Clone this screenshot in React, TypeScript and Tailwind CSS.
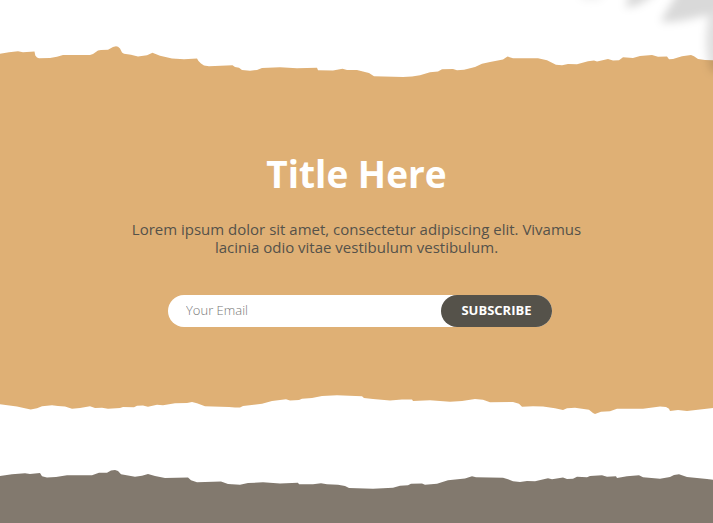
const upperEdge =
  "0,53.7 9,52.3 18,51.3 23,52.3 34.5,51.6 35.3,55.5 37,57.5 39,58.2 50,58 57,56.8 63,55 90,55 93,54 98,50.6 101,50 108,49.7 113,47 116,46.3 118,46.8 120,48.5 122,52.4 124,53.8 131,54.8 138,56.5 147,55.3 152.5,52.7 160,55.7 172,58.6 184,59.2 197,58.5 198.5,61 201,63.6 204,65.4 209,66.3 232.5,65.3 235,66.9 239,67.8 242,70 250,70.7 257,70 262,68 280,67.2 297,68.3 317,67.8 318,70.3 333,70.4 342.5,68.8 347,70 357,70 369,73 374,76.3 403,77 412,76.5 420,75.3 430,72.3 438,71.5 442,69.3 453,69 457,70.3 464,69.8 475,67 482,63.7 490,62 503,59.5 507.5,56.6 513,58.3 538,58.3 547,60.3 556,64.7 562,65.3 568,64 577,64.2 588,61.2 594,60.5 597,61.4 608,58.9 613,60.6 619,60.2 623,57.3 633,58 640,56 652,55 658,56.8 667,56.4 669,59.2 673,59 682,56.3 691,55 694,56.3 698,59 705,60 713,60.3";
const lowerEdge =
  "713,408 700,409.6 687,411 678,410 670,411 669,408.7 666,407 660,406.6 643,408.7 617,408.7 610,411.3 601,411.7 595,414 593,413 589,409.7 575,407.7 567,408.3 563,410 555,408.3 543,406.6 533,406.2 522,406.7 519,403.7 513,402 490,402.3 483,399.7 475,399 462,401 450,401.7 430,400.3 413,401 412,399.5 402,399.4 390,400.5 373,399 364,398 362,396.2 337,395.3 322,396 312,398 302,398.7 299,400 290,400.4 286,399.3 272,401 262,403.7 243,406 240,407.5 235,407.5 229,407 205,406.3 197,403.3 192,402 187,403 175,403.3 163,405.3 157,404.8 148,406.7 143,405.5 137,405.7 134,407.3 123,407 120,408 108,408.7 102,407.7 95,408 90,406.3 80,408 72,408.7 65,406.5 58,406 52,405.3 42,406.3 37,408.3 30.7,409.5 26,408.6 17,406.5 0,404.3";
const footerEdge =
  "0,476 12,474.3 25,473.3 30,474 40,473.1 42,476.3 47,477.6 56,477 67,475.3 92,475.3 99,472.7 107,472.7 111,470.6 115,470 118,471 121,474.3 135,476.7 142,475.7 148,474 155,476 165,478 188,477.4 191,480.3 197,482.3 221,481.6 228,484 240,484.7 248,483 263,482.3 280,483.5 298,482.7 299,484.3 313,484.3 321,483.3 327,484.3 338,484.7 345,486 349,488 373,488.7 393,487.7 400,485.7 408,485.3 411,483.7 422,483.5 425,484.7 437,483.7 448,480.3 465,478.5 472,476.3 476,477.3 503,477.7 508,479.3 513,481.3 520,482 527,481 535,481.3 548,478.3 552,479.2 563,477.6 567,479 573,478.7 577,476.7 587,477.3 590,476 602,475.3 607,476.7 616,476.3 617,478 627,476.3 639,475.3 643,477.3 660,478.7 670,477 674,475 679,474.3 687,477 707,479 713,479.7";

function LeafShadow() {
  return (
    <svg
      className="pointer-events-none absolute top-0 right-0 h-24 w-40"
      viewBox="0 0 160 96"
      aria-hidden="true"
    >
      <defs>
        <filter
          id="leaf-blur"
          filterUnits="userSpaceOnUse"
          x="-20"
          y="-60"
          width="240"
          height="200"
        >
          <feGaussianBlur stdDeviation="4" />
        </filter>
      </defs>
      <g fill="#000" filter="url(#leaf-blur)">
        <path
          d="M108 22 C112 10 122 2 130 -20 L200 -20 L200 6 C158 12 130 24 108 22Z"
          fillOpacity="0.15"
        />
        <path d="M158 72 C151 48 153 32 156 14 L200 14 L200 72 Z" fillOpacity="0.13" />
        <path d="M72 7 L78 -10 L104 -10 C96 0 84 8 72 7Z" fillOpacity="0.15" />
        <path d="M24 -10 L54 -10 L46 0 L30 0Z" fillOpacity="0.06" />
      </g>
    </svg>
  );
}

export default function App() {
  return (
    <div className="relative flex min-h-screen flex-col overflow-hidden bg-white font-['Open_Sans',sans-serif]">
      <main className="pt-11">
        <svg
          className="block h-9 w-full"
          viewBox="0 44 713 36"
          preserveAspectRatio="none"
          aria-hidden="true"
        >
          <polygon points={`${upperEdge} 713,81 0,81`} fill="#dfb075" />
        </svg>
        <section className="flex flex-col items-center bg-[#dfb075] px-6 pt-17 pb-16 text-center">
          <h1 className="text-[37px] leading-[52px] font-bold text-white">Title Here</h1>
          <p className="mt-5 max-w-[470px] text-[15px] leading-[18px] text-[#55524a]">
            Lorem ipsum dolor sit amet, consectetur adipiscing elit. Vivamus lacinia odio vitae
            vestibulum vestibulum.
          </p>
          <form
            className="mt-[39px] flex w-full max-w-[391px] pl-[7px]"
            onSubmit={(event) => event.preventDefault()}
          >
            <div className="flex h-8 w-full rounded-full bg-white">
              <input
                id="email"
                type="email"
                aria-label="Your Email"
                placeholder="Your Email"
                className="min-w-0 flex-1 rounded-l-full bg-transparent pl-[18px] text-[13px] font-light text-[#55524a] outline-none placeholder:text-[#777777]"
              />
              <button
                type="submit"
                className="w-[111px] shrink-0 rounded-full bg-[#55524a] text-[13px] font-bold text-white"
              >
                SUBSCRIBE
              </button>
            </div>
          </form>
        </section>
        <svg
          className="block h-7 w-full"
          viewBox="0 391 713 28"
          preserveAspectRatio="none"
          aria-hidden="true"
        >
          <polygon points={`0,390 713,390 ${lowerEdge}`} fill="#dfb075" />
        </svg>
      </main>
      <footer className="flex flex-1 flex-col pt-12">
        <svg
          className="block h-6 w-full"
          viewBox="0 467 713 24"
          preserveAspectRatio="none"
          aria-hidden="true"
        >
          <polygon points={`${footerEdge} 713,492 0,492`} fill="#82796e" />
        </svg>
        <div className="min-h-8 flex-1 bg-[#82796e]" />
      </footer>
      <LeafShadow />
    </div>
  );
}
